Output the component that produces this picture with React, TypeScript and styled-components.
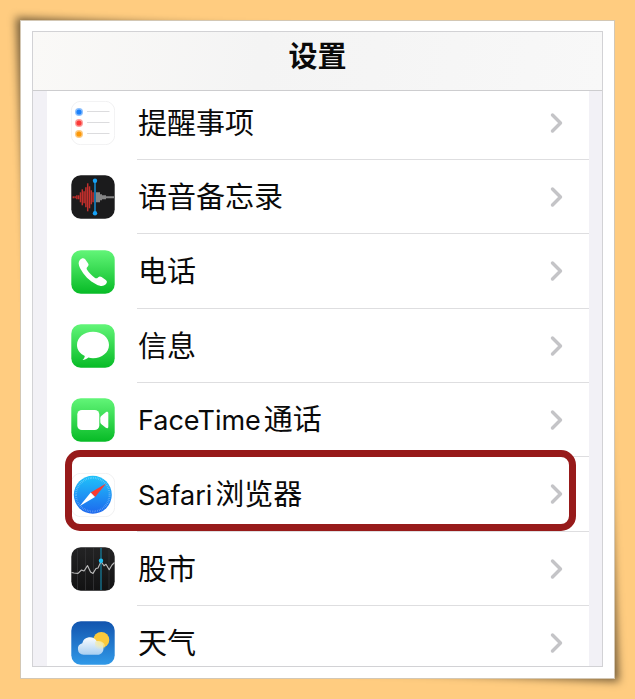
import React from 'react';
import styled, { createGlobalStyle } from 'styled-components';

const GlobalStyle = createGlobalStyle`
  *, *::before, *::after { box-sizing: border-box; }
  body {
    margin: 0;
    background: #ffcc80;
    color: #0a0a0a;
    font-family: Inter, "Noto Sans CJK SC", sans-serif;
  }
`;

const Page = styled.main`
  display: flex;
  height: 100vh;
  padding: 20px;
  isolation: isolate;
  overflow: hidden;
`;

const Card = styled.div`
  position: relative;
  flex: 1;
  display: flex;
  min-width: 0;
  padding: 10px 11px 11px;
  border: 1px solid #d3c7b4;
  background: #ffffff;

  &::before {
    content: '';
    position: absolute;
    z-index: -1;
    inset: 9px;
    background: rgba(0, 0, 0, 0.55);
    filter: blur(4px);
    transform: skew(2.5deg, 2.5deg);
  }

  &::after {
    content: '';
    position: absolute;
    z-index: -1;
    inset: 0;
    background: #ffffff;
  }
`;

const Screen = styled.section`
  flex: 1;
  display: flex;
  flex-direction: column;
  min-width: 0;
  border: 1px solid #d2d2d5;
  background: #f2f1f6;
`;

const Header = styled.header`
  z-index: 1;
  display: flex;
  align-items: center;
  justify-content: center;
  height: 59px;
  flex: none;
  padding-bottom: 8px;
  border-bottom: 1px solid #cdcdcf;
  background: linear-gradient(100deg, #faf9f7, #f4f4f4 40%, #f5f5f5 60%, #f8f8f8);
`;

const Title = styled.h1`
  margin: 0;
  font-size: 29px;
  line-height: 40px;
  font-weight: 700;
`;

const Viewport = styled.nav`
  flex: 1;
  min-height: 0;
  padding: 0 13px 0 14px;
  overflow: hidden;
`;

const List = styled.ul`
  margin: -5px 0 0;
  padding: 0;
  list-style: none;
  background: #ffffff;
`;

const Item = styled.li`
  position: relative;
  height: 74px;

  &:nth-child(3n) {
    height: 75px;
  }
`;

const RowLink = styled.a`
  display: flex;
  align-items: center;
  gap: 22px;
  height: 100%;
  padding-left: 24px;
  color: inherit;
  text-decoration: none;
`;

const AppIcon = styled.svg`
  flex: none;
  width: 44px;
  height: 44px;
`;

const RowBody = styled.span`
  flex: 1;
  display: flex;
  align-items: center;
  justify-content: space-between;
  align-self: stretch;
  padding-right: 26px;
  border-bottom: 1px solid #dedee0;
`;

const Label = styled.span`
  display: flex;
  align-items: baseline;
  gap: 3px;
  padding: 2px 0 0 1px;
  font-size: 29px;
  line-height: 40px;
  white-space: nowrap;
`;

const Latin = styled.span`
  font-size: 27px;
`;

const Chevron = styled.svg`
  flex: none;
  width: 13px;
  height: 22px;
  fill: none;
  stroke: #c4c4c7;
  stroke-width: 3.4;
  stroke-linecap: round;
  stroke-linejoin: round;
`;

const Highlight = styled.span`
  position: absolute;
  inset: -7px 13px 1px 18px;
  border: 7px solid #971a1a;
  border-radius: 15px;
  pointer-events: none;
`;

const Tile = ({ fill, stroke }: { fill: string; stroke?: string }) => (
  <rect x="0.3" y="0.3" width="43.4" height="43.4" rx="9.5" fill={fill} stroke={stroke ?? 'none'} />
);

const GreenGradient = ({ id }: { id: string }) => (
  <linearGradient id={id} x1="0" y1="0" x2="0" y2="1">
    <stop offset="0" stopColor="#62f578" />
    <stop offset="1" stopColor="#07bb26" />
  </linearGradient>
);

const RemindersIcon = () => (
  <AppIcon viewBox="0 0 44 44" aria-hidden="true">
    <Tile fill="#fff" stroke="#f1f1f2" />
    {['#1d82fb', '#fb3b38', '#fc9809'].map((color, i) => (
      <g key={color}>
        <circle cx="8" cy={11 + i * 11} r="4" fill={color} opacity="0.5" />
        <circle cx="8" cy={11 + i * 11} r="2.6" fill={color} />
        <path d={`M16 ${10.5 + i * 11}H38.5`} stroke="#dcdcde" />
      </g>
    ))}
  </AppIcon>
);

const RED_BARS = [1, 1, 2, 2, 5, 8, 6, 10, 14, 11, 7, 5];
const GREY_BARS = [5, 5, 3, 2, 2, 1, 1, 1, 1];

const VoiceMemosIcon = () => (
  <AppIcon viewBox="0 0 44 44" aria-hidden="true">
    <Tile fill="#1b1b1c" />
    {RED_BARS.map((h, i) => (
      <path key={i} d={`M${2.3 + i * 1.8} ${22.3 - h}v${h * 2}`} stroke="#c32f2c" strokeWidth="1.5" />
    ))}
    {GREY_BARS.map((h, i) => (
      <path key={i} d={`M${26 + i * 2} ${22.3 - h}v${h * 2}`} stroke="#b5b5b5" strokeWidth="1.4" />
    ))}
    <path d="M24 6v32" stroke="#1671a6" strokeWidth="2" />
    <circle cx="24" cy="5.8" r="2.2" fill="#16a2f6" />
    <circle cx="24" cy="38.2" r="2.2" fill="#16a2f6" />
  </AppIcon>
);

const PhoneIcon = () => (
  <AppIcon viewBox="0 0 44 44" aria-hidden="true">
    <defs><GreenGradient id="phone-green" /></defs>
    <Tile fill="url(#phone-green)" />
    <path
      fill="#fff"
      d="M8.8 10C10.8 7.8 12.7 7.6 14.2 9.3L17 13.3C17.9 14.8 17.7 15.6 16.6 16.7C15.4 17.9 15.3 18.7 16.4 20.3C18.3 23 20.4 25.2 23.4 27.4C25 28.6 25.8 28.5 27 27.4C28.3 26.2 29.2 26.1 30.6 27L34.8 30C36.4 31.3 36.3 32.7 34.5 34.6C32.4 36.6 29 36.3 25.5 34.5C18.3 30.8 12.8 25.3 9.1 18.2C7.4 14.8 7.1 12 8.8 10Z"
    />
  </AppIcon>
);

const MessagesIcon = () => (
  <AppIcon viewBox="0 0 44 44" aria-hidden="true">
    <defs><GreenGradient id="messages-green" /></defs>
    <Tile fill="url(#messages-green)" />
    <path
      fill="#fff"
      d="M22 7.8C31 7.8 38 13.6 38 21S31 34.2 22 34.2C20.3 34.2 18.8 34 17.4 33.6C15.6 35 13.6 35.9 11.6 36C12.9 34.9 13.6 33.5 13.8 32C9 29.8 6 25.7 6 21C6 13.6 13 7.8 22 7.8Z"
    />
  </AppIcon>
);

const FaceTimeIcon = () => (
  <AppIcon viewBox="0 0 44 44" aria-hidden="true">
    <defs><GreenGradient id="facetime-green" /></defs>
    <Tile fill="url(#facetime-green)" />
    <rect x="6.3" y="12" width="22" height="20" rx="4.6" fill="#fff" />
    <path
      fill="#fff"
      d="M29.3 20.2C29.3 19 29.7 18.4 30.5 17.7L34.8 14.2C36.1 13.3 37.3 13.7 37.3 15.2V28.8C37.3 30.3 36.1 30.7 34.8 29.8L30.5 26.3C29.7 25.6 29.3 25 29.3 23.8Z"
    />
  </AppIcon>
);

const SafariIcon = () => (
  <AppIcon viewBox="0 0 44 44" aria-hidden="true">
    <defs>
      <linearGradient id="compass" x1="0" y1="0" x2="0" y2="1">
        <stop offset="0" stopColor="#20c3fa" />
        <stop offset="1" stopColor="#1d68ee" />
      </linearGradient>
    </defs>
    <Tile fill="#fff" stroke="#f1f1f2" />
    <circle cx="21.8" cy="21.7" r="19" fill="url(#compass)" />
    <circle cx="21.8" cy="21.7" r="16.8" fill="none" stroke="#fff" strokeWidth="2" strokeDasharray="0.5 1.26" opacity="0.45" />
    <path d="M35.2 10.5L19.7 19.4L24 24Z" fill="#fa3b30" />
    <path d="M8.8 33L19.7 19.4L24 24Z" fill="#fff" />
  </AppIcon>
);

const StocksIcon = () => (
  <AppIcon viewBox="0 0 44 44" aria-hidden="true">
    <defs>
      <linearGradient id="chart-back" x1="0" y1="0" x2="0" y2="1">
        <stop offset="0" stopColor="#232324" />
        <stop offset="1" stopColor="#121213" />
      </linearGradient>
    </defs>
    <Tile fill="url(#chart-back)" />
    <path d="M6.5 1V43M14.5 1V43M22.5 1V43M38 1V43" stroke="#2f2f31" />
    <path d="M30 1V43" stroke="#1683a3" strokeWidth="1.2" />
    <path
      d="M0.5 25.5L3 26L7 26.4L10.5 23L13 24L16.5 18.6L19.5 25L22 26.4L25 21.5L27 21L30 14.5L33 18.8L35 17.3L38.2 22.7L41 18L43.5 15.5"
      fill="none"
      stroke="#bdbdbd"
      strokeWidth="1.1"
      strokeLinejoin="round"
    />
    <circle cx="30" cy="13.8" r="2.2" fill="#1dbdf0" />
  </AppIcon>
);

const WeatherIcon = () => (
  <AppIcon viewBox="0 0 44 44" aria-hidden="true">
    <defs>
      <linearGradient id="sky" x1="0" y1="0" x2="0" y2="1">
        <stop offset="0" stopColor="#1254ae" />
        <stop offset="1" stopColor="#3099e8" />
      </linearGradient>
      <linearGradient id="cloud" x1="0" y1="0" x2="0" y2="1">
        <stop offset="0" stopColor="#fafcfe" />
        <stop offset="1" stopColor="#a9cff1" />
      </linearGradient>
      <radialGradient id="glow" gradientUnits="userSpaceOnUse" cx="30" cy="20" r="9">
        <stop offset="0.4" stopColor="#f3eaa6" stopOpacity="0.9" />
        <stop offset="1" stopColor="#f3eaa6" stopOpacity="0" />
      </radialGradient>
    </defs>
    <Tile fill="url(#sky)" />
    <circle cx="30.3" cy="18.9" r="8" fill="#fbc93c" />
    <path
      d="M12.6 33.8A5.9 5.9 0 0 1 11.3 22.2A7.8 7.8 0 0 1 25.7 20.3A7 7 0 0 1 28 33.8Z"
      fill="url(#cloud)"
    />
    <path d="M24 20.8Q25 20.2 25.7 20.3A7 7 0 0 1 34.4 28H24Z" fill="url(#glow)" />
  </AppIcon>
);

type Entry = { id: string; latin?: string; text: string; Icon: React.FC; highlighted?: boolean };

const ENTRIES: Entry[] = [
  { id: 'reminders', text: '提醒事项', Icon: RemindersIcon },
  { id: 'voice-memos', text: '语音备忘录', Icon: VoiceMemosIcon },
  { id: 'phone', text: '电话', Icon: PhoneIcon },
  { id: 'messages', text: '信息', Icon: MessagesIcon },
  { id: 'facetime', latin: 'FaceTime', text: '通话', Icon: FaceTimeIcon },
  { id: 'safari', latin: 'Safari', text: '浏览器', Icon: SafariIcon, highlighted: true },
  { id: 'stocks', text: '股市', Icon: StocksIcon },
  { id: 'weather', text: '天气', Icon: WeatherIcon },
];

export default function App() {
  return (
    <>
      <GlobalStyle />
      <Page lang="zh-CN">
        <Card>
          <Screen>
            <Header>
              <Title>设置</Title>
            </Header>
            <Viewport aria-label="设置">
              <List>
                {ENTRIES.map(({ id, latin, text, Icon, highlighted }) => (
                  <Item key={id}>
                    <RowLink href={`#${id}`}>
                      <Icon />
                      <RowBody>
                        <Label>
                          {latin && <Latin>{latin}</Latin>}
                          <span>{text}</span>
                        </Label>
                        <Chevron viewBox="0 0 13 22" aria-hidden="true">
                          <path d="M2.5 3L10.5 11L2.5 19" />
                        </Chevron>
                      </RowBody>
                    </RowLink>
                    {highlighted && <Highlight />}
                  </Item>
                ))}
              </List>
            </Viewport>
          </Screen>
        </Card>
      </Page>
    </>
  );
}
